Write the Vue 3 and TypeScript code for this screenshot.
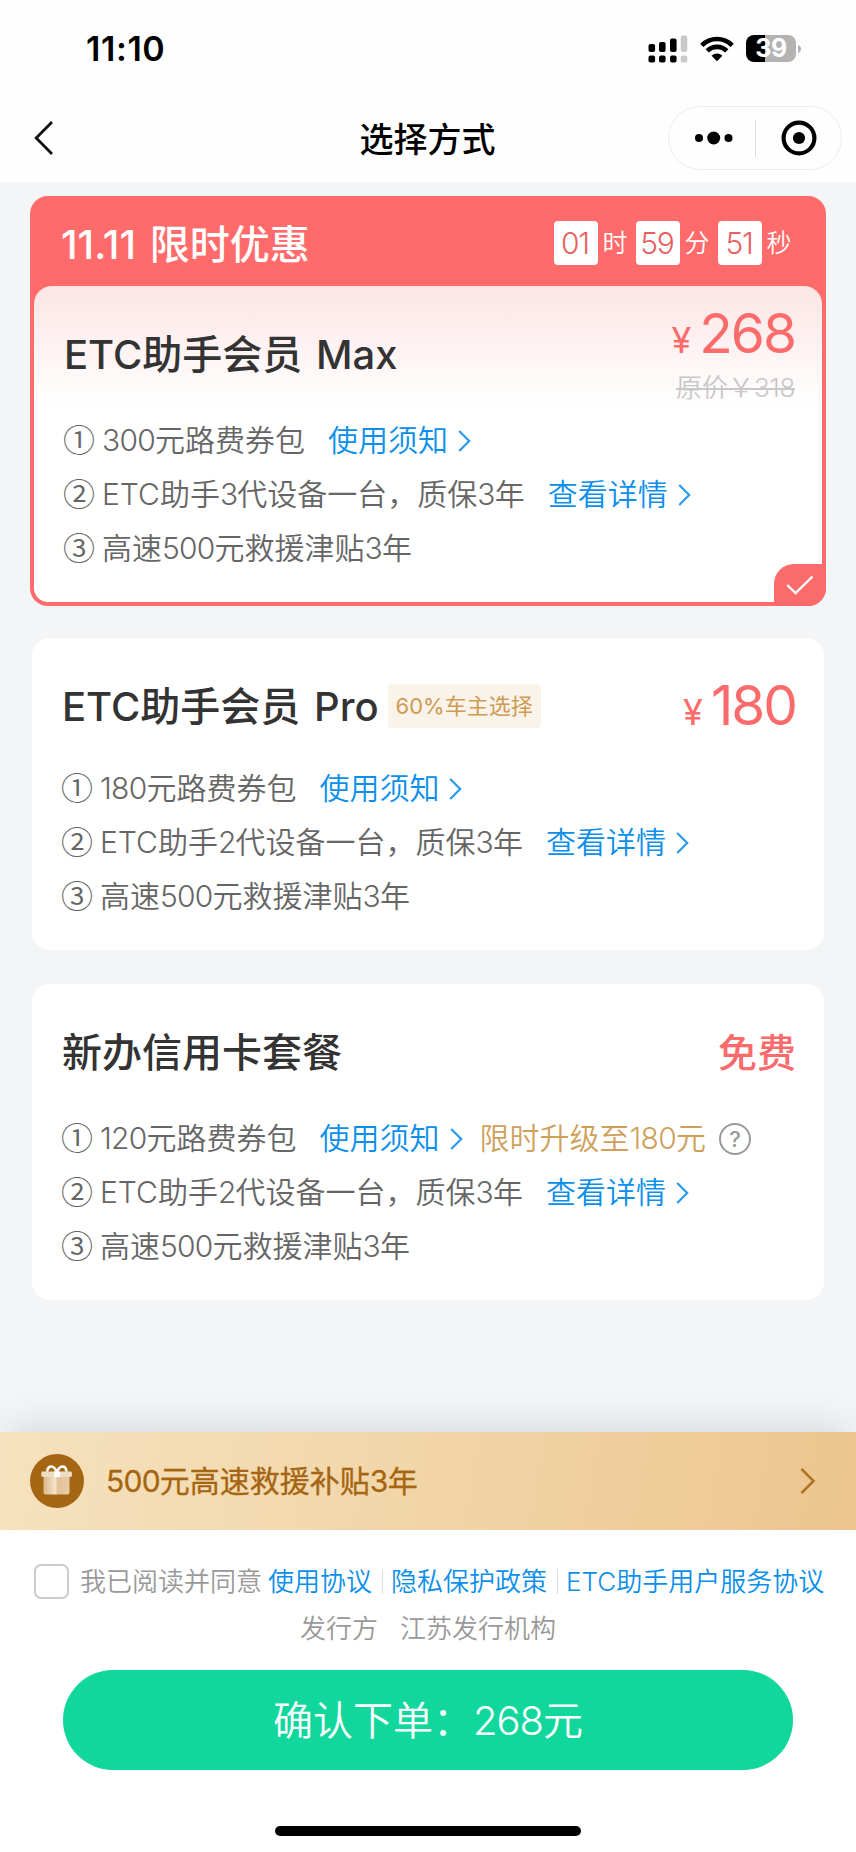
<script setup lang="ts">
interface Perk {
  mark: string
  text: string
  link?: string
  upgrade?: string
}
interface Plan {
  id: string
  title: string
  badge?: string
  price?: string
  free?: string
  perks: Perk[]
}
interface Run {
  text: string
  kind: string
}

const maxPlan: Plan = {
  id: 'max',
  title: 'ETC助手会员 Max',
  price: '268',
  perks: [
    { mark: '①', text: '300元路费券包', link: '使用须知' },
    { mark: '②', text: 'ETC助手3代设备一台，质保3年', link: '查看详情' },
    { mark: '③', text: '高速500元救援津贴3年' },
  ],
}

const otherPlans: Plan[] = [
  {
    id: 'pro',
    title: 'ETC助手会员 Pro',
    badge: '60%车主选择',
    price: '180',
    perks: [
      { mark: '①', text: '180元路费券包', link: '使用须知' },
      { mark: '②', text: 'ETC助手2代设备一台，质保3年', link: '查看详情' },
      { mark: '③', text: '高速500元救援津贴3年' },
    ],
  },
  {
    id: 'card',
    title: '新办信用卡套餐',
    free: '免费',
    perks: [
      { mark: '①', text: '120元路费券包', link: '使用须知', upgrade: '限时升级至180元' },
      { mark: '②', text: 'ETC助手2代设备一台，质保3年', link: '查看详情' },
      { mark: '③', text: '高速500元救援津贴3年' },
    ],
  },
]

const countdown = [
  { value: '01', unit: '时' },
  { value: '59', unit: '分' },
  { value: '51', unit: '秒' },
]

// Splits mixed text so digits can be tracked tighter than the Chinese around them.
function runs(text: string): Run[] {
  return (text.match(/[\x00-\x7f]+|[^\x00-\x7f]+/g) ?? []).map((part) => ({
    text: part,
    kind: /^\d+$/.test(part) ? 'digits' : part.charCodeAt(0) < 128 ? 'latin' : 'han',
  }))
}
</script>

<template>
  <div class="screen">
    <header class="top">
      <div class="status">
        <span class="clock">11:10</span>
        <div class="status-icons">
          <svg class="signal" width="40" height="28" viewBox="0 0 40 28">
            <g fill="#000">
              <rect x="0.5" y="9" width="6.6" height="8" rx="2" />
              <rect x="11" y="7" width="6.6" height="10" rx="2" />
              <rect x="22" y="3.5" width="6.6" height="13.5" rx="2" />
              <rect x="0.5" y="20.5" width="6.6" height="7" rx="2" />
              <rect x="11" y="20.5" width="6.6" height="7" rx="2" />
              <rect x="22" y="20.5" width="6.6" height="7" rx="2" />
            </g>
            <g fill="#c9c9c9">
              <rect x="32.7" y="0.5" width="6.6" height="16.5" rx="2" />
              <rect x="32.7" y="20.5" width="6.6" height="7" rx="2" />
            </g>
          </svg>
          <svg class="wifi" width="34" height="26" viewBox="0 0 34 26">
            <g fill="none" stroke="#000" stroke-width="4.6">
              <path d="M1.8 9.3A21.6 21.6 0 0 1 32.2 9.3" />
              <path d="M7.2 14.9A13.9 13.9 0 0 1 26.8 14.9" />
            </g>
            <path d="M17 25.2L11.6 19.7A7.7 7.7 0 0 1 22.4 19.7Z" fill="#000" />
          </svg>
          <div class="battery">
            <div class="cell"><span>39</span></div>
            <svg width="3" height="8" viewBox="0 0 3 8"><path d="M0 0Q3 1 3 4T0 8Z" fill="#b3b3b3" /></svg>
          </div>
        </div>
      </div>
      <nav class="nav">
        <svg class="back" width="20" height="36" viewBox="0 0 20 36">
          <path d="M18 2L2.2 18L18 34" fill="none" stroke="#111" stroke-width="2.8" />
        </svg>
        <h1>选择方式</h1>
        <div class="capsule">
          <svg class="dots" width="38" height="14" viewBox="0 0 38 14">
            <circle cx="4" cy="7" r="4" />
            <circle cx="18.7" cy="7" r="6.5" />
            <circle cx="33.5" cy="7" r="4" />
          </svg>
          <i class="rule"></i>
          <svg class="target" width="36" height="36" viewBox="0 0 36 36">
            <circle cx="18" cy="18" r="15.4" fill="none" stroke="#000" stroke-width="4.2" />
            <circle cx="18" cy="18" r="6.1" />
          </svg>
        </div>
      </nav>
    </header>

    <main>
      <section class="promo">
        <div class="promo-head">
          <h2><span v-for="(r, i) in runs('11.11 限时优惠')" :key="i" :class="r.kind">{{ r.text }}</span></h2>
          <div class="countdown">
            <template v-for="c in countdown" :key="c.unit">
              <b>{{ c.value }}</b><span>{{ c.unit }}</span>
            </template>
          </div>
        </div>
        <div class="promo-body">
          <div class="plan-head">
            <h3><span v-for="(r, i) in runs(maxPlan.title)" :key="i" :class="r.kind">{{ r.text }}</span></h3>
            <div class="price-col">
              <div class="price"><small>¥</small><span>{{ maxPlan.price }}</span></div>
              <div class="was">原价￥<span>318</span></div>
            </div>
          </div>
          <ul>
            <li v-for="p in maxPlan.perks" :key="p.mark">
              <span class="mark">{{ p.mark }}</span>
              <span><span v-for="(r, i) in runs(p.text)" :key="i" :class="r.kind">{{ r.text }}</span></span>
              <a v-if="p.link">{{ p.link }}<svg width="13" height="22" viewBox="0 0 13 22"><path d="M1.2 1L11.2 11L1.2 21" /></svg></a>
            </li>
          </ul>
          <div class="picked">
            <svg width="28" height="20" viewBox="0 0 28 20"><path d="M1.2 10L9.6 18L26.5 1.5" fill="none" stroke="#fff" stroke-width="2.4" /></svg>
          </div>
        </div>
      </section>

      <section v-for="plan in otherPlans" :key="plan.id" class="plan" :class="plan.id">
        <div class="plan-head">
          <h3><span v-for="(r, i) in runs(plan.title)" :key="i" :class="r.kind">{{ r.text }}</span></h3>
          <span v-if="plan.badge" class="badge">{{ plan.badge }}</span>
          <div v-if="plan.price" class="price"><small>¥</small><span>{{ plan.price }}</span></div>
          <div v-else class="free">{{ plan.free }}</div>
        </div>
        <ul>
          <li v-for="p in plan.perks" :key="p.mark">
            <span class="mark">{{ p.mark }}</span>
            <span><span v-for="(r, i) in runs(p.text)" :key="i" :class="r.kind">{{ r.text }}</span></span>
            <a v-if="p.link">{{ p.link }}<svg width="13" height="22" viewBox="0 0 13 22"><path d="M1.2 1L11.2 11L1.2 21" /></svg></a>
            <span v-if="p.upgrade" class="upgrade"><span v-for="(r, i) in runs(p.upgrade)" :key="i" :class="r.kind">{{ r.text }}</span></span>
            <span v-if="p.upgrade" class="help">?</span>
          </li>
        </ul>
      </section>
    </main>

    <footer>
      <div class="rescue">
        <svg class="gift" width="54" height="54" viewBox="0 0 54 54">
          <defs>
            <linearGradient id="box" x1="0" x2="1" y1="0" y2="0">
              <stop offset="0" stop-color="#dcb88a" />
              <stop offset="0.48" stop-color="#f6e6cf" />
              <stop offset="0.52" stop-color="#e2c299" />
              <stop offset="1" stop-color="#e6cba6" />
            </linearGradient>
          </defs>
          <circle cx="27" cy="27" r="27" fill="#a56614" />
          <rect x="13.5" y="22" width="26" height="18.5" rx="2" fill="url(#box)" />
          <rect x="11.3" y="17.5" width="30.6" height="5.6" rx="1.4" fill="#eedcc2" />
          <rect x="24" y="17.5" width="6" height="5.6" fill="#fff" />
          <path d="M26.5 17.8C24 11 18.5 11 17.3 16.6M27.2 17.8C29.7 11 35.2 11 36.4 16.6" fill="none" stroke="#fff" stroke-width="2.6" stroke-linecap="round" />
        </svg>
        <span class="rescue-text"><span v-for="(r, i) in runs('500元高速救援补贴3年')" :key="i" :class="r.kind">{{ r.text }}</span></span>
        <svg class="go" width="16" height="28" viewBox="0 0 16 28"><path d="M1.5 2L13.6 14L1.5 26" fill="none" stroke="#b0731f" stroke-width="2.5" /></svg>
      </div>
      <div class="agree">
        <i class="box"></i>
        <span class="read">我已阅读并同意</span>
        <a>使用协议</a><i class="bar"></i><a>隐私保护政策</a><i class="bar"></i><a>ETC助手用户服务协议</a>
      </div>
      <div class="issuer"><span>发行方</span><span>江苏发行机构</span></div>
      <button type="button">确认下单：<span>268</span>元</button>
      <div class="home"></div>
    </footer>
  </div>
</template>

<style>
body {
  margin: 0;
  background: #fff;
}
</style>

<style scoped>
.screen {
  width: 856px;
  height: 1852px;
  overflow: hidden;
  display: flex;
  flex-direction: column;
  background: #f3f5f7;
  font-family: Inter, "Noto Sans CJK SC", sans-serif;
  font-weight: 350;
  color: #333;
}
h1, h2, h3 { margin: 0; font-weight: 500; }
svg { display: block; flex: none; }
.digits { letter-spacing: -0.025em; }
h2 .latin, h3 .latin { word-spacing: 3px; }
h3 .latin { font-weight: 450; }

.top { height: 182px; background: #fefefe; flex: none; }
.status {
  height: 97px;
  box-sizing: border-box;
  padding: 0 55px 0 86px;
  display: flex;
  justify-content: space-between;
  align-items: center;
}
.clock { font-size: 34px; font-weight: 600; color: #000; letter-spacing: 0.6px; }
.status-icons { display: flex; align-items: center; }
.wifi { margin-left: 12px; }
.battery { display: flex; align-items: center; gap: 2px; margin-left: 12px; }
.cell {
  width: 50px;
  height: 27px;
  border-radius: 8px;
  background: linear-gradient(90deg, #000 19px, #b3b3b3 19px);
  color: #fff;
  font-size: 25px;
  font-weight: 700;
  line-height: 27px;
  text-align: center;
  letter-spacing: -0.5px;
}
.nav {
  height: 85px;
  display: grid;
  grid-template-columns: 188px 1fr 188px;
  align-items: start;
}
.back { margin: 23px 0 0 34px; }
h1 { font-size: 34px; line-height: 85px; text-align: center; color: #000; padding-right: 1px; }
.capsule {
  width: 174px;
  height: 64px;
  margin-top: 9px;
  box-sizing: border-box;
  border: 1px solid #ececec;
  border-radius: 32px;
  display: flex;
  align-items: center;
}
.dots { margin-left: 26px; }
.rule { width: 1px; height: 37px; background: #ddd; margin-left: 22px; }
.target { margin-left: 25px; }

main { flex: none; height: 1250px; padding: 14px 30px 0; box-sizing: border-box; }
.promo {
  height: 410px;
  box-sizing: border-box;
  padding: 0 4px 4px;
  border-radius: 18px;
  background: #ff6b6b;
}
.promo-head {
  height: 90px;
  padding: 0 26px 0 27px;
  display: flex;
  justify-content: space-between;
  align-items: center;
}
h2 { font-size: 40px; line-height: 40px; color: #fff; padding-top: 7px; white-space: pre; }
.countdown { display: flex; align-items: center; padding-top: 4px; }
.countdown b {
  width: 44px;
  height: 44px;
  border-radius: 4px;
  background: #fff;
  color: #e85f60;
  font-size: 30px;
  font-weight: 350;
  line-height: 44px;
  text-align: center;
  letter-spacing: -1.2px;
  text-indent: -2px;
}
.countdown span { width: 38px; font-size: 25px; line-height: 40px; color: #fff; text-align: center; box-sizing: border-box; padding-right: 4px; }
.countdown span:last-child { width: 34px; padding: 0; }
.promo-body {
  position: relative;
  height: 316px;
  border-radius: 18px 18px 14px 14px;
  background: linear-gradient(#fde5e5, #fff 120px);
}
.promo-body .plan-head { height: 125px; box-sizing: border-box; padding: 0 27px 0 30px; align-items: flex-start; }
.promo-body h3 { line-height: 137px; }
.promo-body ul { padding-left: 30px; }
.plan-head { display: flex; align-items: center; }
h3 { font-size: 40px; color: #333; white-space: pre; }
.price-col { margin-left: auto; text-align: right; }
.price {
  display: flex;
  align-items: baseline;
  justify-content: flex-end;
  margin-left: auto;
  color: #fb6b6b;
  font-size: 55px;
  font-weight: 430;
  line-height: 60px;
  letter-spacing: -2px;
}
.price small { font-size: 36px; margin-right: 8px; letter-spacing: 0; }
.price-col .price { margin-top: 17px; }
.was { font-size: 26px; line-height: 34px; margin-top: 1px; color: #c8c8c8; text-decoration: line-through; text-decoration-thickness: 2px; }
.was span { letter-spacing: -0.3px; }
ul { list-style: none; margin: 0; padding: 0; }
li { display: flex; align-items: center; height: 54px; font-size: 30px; color: #666; white-space: pre; }
.mark { width: 39px; margin-left: -1px; font-family: "Noto Sans CJK SC", sans-serif; font-size: 32px; line-height: 54px; }
a { color: #0b8fea; }
li a { display: flex; align-items: center; margin-left: 23px; }
li a svg { margin: 5px 0 0 10px; }
li a path { fill: none; stroke: #2a9bea; stroke-width: 2.2; }
.picked {
  position: absolute;
  right: -4px;
  bottom: -4px;
  width: 52px;
  height: 42px;
  border-radius: 20px 0 18px 0;
  background: #fb6b6b;
  display: flex;
  align-items: center;
  justify-content: center;
}

.plan { width: 792px; margin: 32px 2px 0; border-radius: 18px; background: #fff; box-sizing: border-box; padding: 0 28px 0 30px; height: 312px; }
.plan .plan-head { height: 121px; padding-top: 15px; box-sizing: border-box; }
.plan h3 { padding-bottom: 4px; }
.plan .price { padding-top: 5px; }
.plan.card { margin-top: 34px; height: 316px; }
.plan.card .plan-head { height: 125px; padding-top: 11px; }
.badge {
  height: 44px;
  box-sizing: border-box;
  margin-left: 9px;
  padding: 0 8px;
  border-radius: 4px;
  background: #faf3ea;
  color: #cf9a52;
  font-size: 22px;
  font-weight: 400;
  line-height: 45px;
}
.free { margin: -5px 0 0 auto; color: #fb6b6b; font-size: 39px; font-weight: 500; }
.upgrade { color: #cf9f5c; margin-left: 17px; }
.help {
  width: 32px;
  height: 32px;
  box-sizing: border-box;
  border: 2.2px solid #999;
  border-radius: 50%;
  margin: 5px 0 0 13px;
  font-size: 22px;
  font-weight: 500;
  line-height: 28px;
  text-align: center;
  color: #999;
}

footer { position: relative; flex: 1; background: #fff; box-shadow: 0 -10px 40px -8px rgba(0, 0, 0, 0.14); }
.rescue {
  height: 98px;
  display: flex;
  align-items: center;
  padding: 0 40px 0 30px;
  background: linear-gradient(100deg, #f6e2be, #f1d5a7 50%, #ecc58f);
}
.rescue-text { margin-left: 22px; padding-bottom: 4px; font-size: 30px; font-weight: 400; color: #a56511; -webkit-text-stroke: 0.3px #a56511; }
.go { margin-left: auto; }
.agree { display: flex; align-items: center; height: 36px; margin-top: 33px; padding-left: 34px; font-size: 26px; white-space: nowrap; }
.agree a, .read { padding-bottom: 4px; }
.box { width: 35px; height: 35px; box-sizing: border-box; border: 2px solid #ccc; border-radius: 7px; }
.read { margin: 0 6px 0 11px; color: #999; }
.bar { width: 1px; height: 25px; background: #ddd; margin: 0 8px 0 10px; }
.issuer { display: flex; justify-content: center; gap: 22px; height: 40px; line-height: 40px; margin-top: 10px; font-size: 26px; color: #999; }
button {
  display: block;
  width: 730px;
  height: 100px;
  margin: 21px 0 0 63px;
  padding: 0 0 4px;
  border: 0;
  border-radius: 50px;
  background: #11d79c;
  color: #fff;
  font: inherit;
  font-size: 40px;
}
button span { letter-spacing: -1px; }
.home { width: 306px; height: 10px; margin: 56px 0 0 275px; border-radius: 5px; background: #000; }
</style>
